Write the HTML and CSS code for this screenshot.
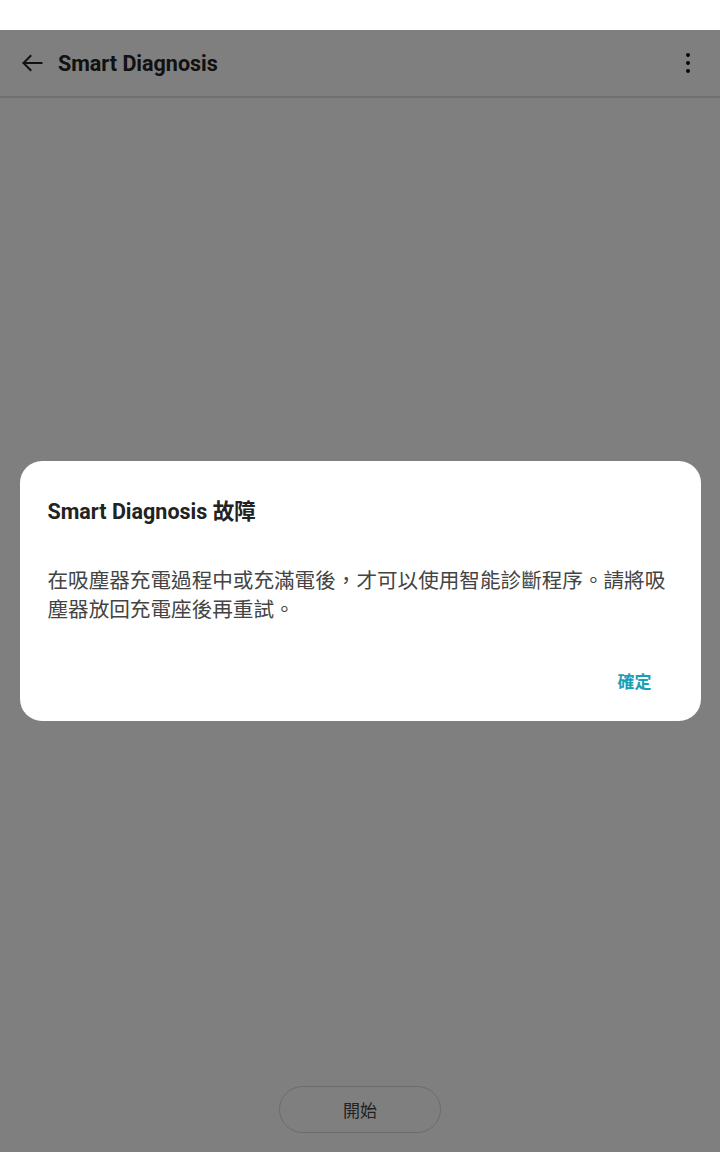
FILE: index.html
```html
<!DOCTYPE html>
<html lang="zh-Hant">
<head>
<meta charset="utf-8">
<title>Smart Diagnosis</title>
<link rel="stylesheet" href="styles.css">
</head>
<body>
<div class="status"></div>
<div class="app">
  <header class="topbar">
    <svg class="back" width="24" height="24" viewBox="0 0 24 24"><path d="M21.5 12H3.5M10.5 5L3.5 12L10.5 19" fill="none" stroke="#222" stroke-width="2" stroke-linecap="square"/></svg>
    <h1 class="title">Smart Diagnosis</h1>
    <svg class="more" width="8" height="24" viewBox="0 0 8 24"><circle cx="4" cy="4" r="2" fill="#111"/><circle cx="4" cy="12" r="2" fill="#111"/><circle cx="4" cy="20" r="2" fill="#111"/></svg>
  </header>
  <main class="content"></main>
  <footer class="footer">
    <button class="start">開始</button>
  </footer>
</div>
<div class="overlay">
  <div class="dialog">
    <h2 class="dlg-title">Smart Diagnosis 故障</h2>
    <p class="dlg-body">在吸塵器充電過程中或充滿電後，才可以使用智能診斷程序。請將吸塵器放回充電座後再重試。</p>
    <div class="dlg-actions"><button class="ok">確定</button></div>
  </div>
</div>
</body>
</html>
```
FILE: styles.css
```css
* { box-sizing: border-box; }
html, body { margin: 0; padding: 0; }
body {
  width: 720px;
  height: 1152px;
  background: #fff;
  font-family: Roboto, "Noto Sans CJK TC", sans-serif;
  position: relative;
  overflow: hidden;
}
.status { height: 30px; background: #fff; }
.app {
  height: 1122px;
  display: flex;
  flex-direction: column;
  background: #fff;
}
.topbar {
  height: 68px;
  border-bottom: 2px solid #e2e2e2;
  display: flex;
  align-items: center;
  padding: 0 20px 0 20px;
}
.back { flex: none; }
.title {
  margin: 0 0 0 14px;
  font-size: 21.5px;
  font-weight: 700;
  color: #222;
  flex: 1;
}
.more { flex: none; margin-right: 8px; }
.content { flex: 1; }
.footer {
  display: flex;
  justify-content: center;
  padding-bottom: 19px;
}
.start {
  width: 162px;
  height: 47px;
  border-radius: 24px;
  border: 1px solid #d6d6d6;
  background: #fff;
  font-family: "Noto Sans CJK TC", sans-serif;
  font-size: 17px;
  color: #444;
}
.overlay {
  position: absolute;
  top: 30px;
  left: 0;
  right: 0;
  bottom: 0;
  background: rgba(0, 0, 0, 0.5);
  display: flex;
  align-items: center;
  justify-content: center;
}
.dialog {
  width: 681px;
  height: 260px;
  background: #fff;
  border-radius: 22px;
  padding: 37px 28px 21px 28px;
  display: flex;
  flex-direction: column;
}
.dlg-title {
  margin: 0;
  font-size: 21.5px;
  line-height: 28px;
  font-weight: 700;
  color: #222;
}
.dlg-body {
  margin: 39px 0 0 0;
  font-family: "Noto Sans CJK TC", sans-serif;
  font-size: 20.6px;
  line-height: 28.5px;
  color: #444;
  flex: 1;
}
.dlg-actions {
  display: flex;
  justify-content: flex-end;
}
.ok {
  border: 0;
  background: transparent;
  font-family: "Noto Sans CJK TC", sans-serif;
  font-weight: 700;
  font-size: 17px;
  color: #1aa0b6;
  height: 40px;
  padding: 0 21px;
}
```
